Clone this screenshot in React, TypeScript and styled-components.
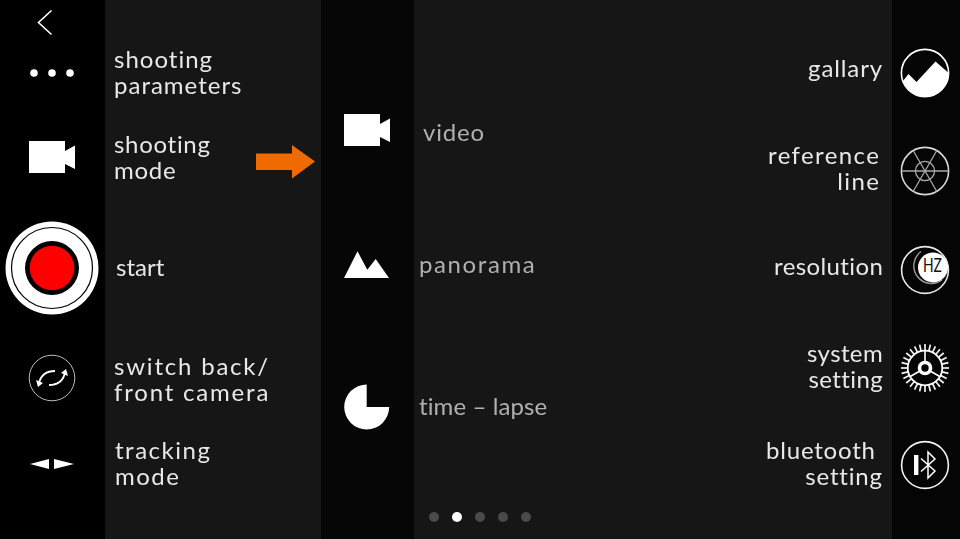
import React from "react";
import styled, { createGlobalStyle } from "styled-components";

const Global = createGlobalStyle`
  html, body { margin: 0; padding: 0; background: #161616; }
  #root { width: 960px; height: 539px; overflow: hidden; }
`;

const Screen = styled.div`
  display: flex;
  width: 960px;
  height: 539px;
  background: #161616;
  font-family: "Lato", "Liberation Sans", sans-serif;
  font-size: 24px;
  font-weight: 400;
  line-height: 26px;
  letter-spacing: 1px;
  color: #e8e8e8;
`;

const LeftSection = styled.section`
  width: 321px;
  display: flex;
  flex-direction: column;
`;

const MidSection = styled.section`
  width: 571px;
  display: flex;
  flex-direction: column;
`;

const RightSection = styled.section`
  width: 68px;
  flex: 1;
  display: flex;
  flex-direction: column;
  margin-left: -203px;
`;

const Row = styled.div<{ $h: number }>`
  display: flex;
  align-items: stretch;
  height: ${(p) => p.$h}px;
`;

const RailCell = styled.div`
  width: 105px;
  flex: none;
  box-sizing: border-box;
  padding-right: 2px;
  background: #000;
  display: flex;
  align-items: center;
  justify-content: center;
`;

const LeftText = styled.div<{ $x?: number; $up?: number }>`
  flex: 1;
  display: flex;
  align-items: center;
  justify-content: space-between;
  will-change: transform;
  padding: 0 6px ${(p) => p.$up ?? 2}px ${(p) => p.$x ?? 9}px;
`;

const Phrase = styled.span<{ $ls?: number; $dy?: number }>`
  letter-spacing: ${(p) => p.$ls ?? 1}px;
  margin-top: ${(p) => p.$dy ?? 0}px;
`;

const ArrowSlot = styled.span`
  display: block;
  margin-top: 9px;
`;

const MidCell = styled.div`
  width: 93px;
  flex: none;
  box-sizing: border-box;
  padding-right: 1px;
  background: #060606;
  display: flex;
  align-items: center;
  justify-content: center;
`;

const MidLabel = styled.div<{ $x: number; $dy?: number; $ls?: number }>`
  display: flex;
  align-items: center;
  padding-left: ${(p) => p.$x}px;
  padding-top: ${(p) => p.$dy ?? 0}px;
  padding-bottom: 2px;
  color: #b0b0b0;
  will-change: transform;
  letter-spacing: ${(p) => p.$ls ?? 1}px;
`;

const Pager = styled.div`
  display: flex;
  align-items: center;
  gap: 13px;
  padding: 0 0 0 15px;
`;

const Dot = styled.span<{ $on?: boolean }>`
  width: 10px;
  height: 10px;
  border-radius: 50%;
  background: ${(p) => (p.$on ? "#ffffff" : "#4a4a4a")};
`;

const RightRow = styled.div<{ $h: number }>`
  display: flex;
  justify-content: flex-end;
  align-items: stretch;
  height: ${(p) => p.$h}px;
`;

const RightLabel = styled.div<{ $dy?: number; $pr?: number; $ls?: number }>`
  align-self: center;
  text-align: right;
  padding-right: ${(p) => p.$pr ?? 9}px;
  margin-top: ${(p) => p.$dy ?? 0}px;
  letter-spacing: ${(p) => p.$ls ?? 1}px;
  will-change: transform;
  white-space: nowrap;
`;

const RightCell = styled.div`
  width: 68px;
  flex: none;
  box-sizing: border-box;
  padding-right: 2px;
  background: #050505;
  display: flex;
  align-items: center;
  justify-content: center;
`;

const Icon = styled.svg`
  display: block;
  flex: none;
`;

const Back = () => (
  <Icon width="60" height="45" viewBox="0 0 60 45">
    <polyline points="29.5,10.5 16.5,22.5 29.5,34.5" fill="none" stroke="#fff" strokeWidth="1.6" />
  </Icon>
);
const Dots = () => (
  <Icon width="50" height="10" viewBox="0 0 50 10">
    <circle cx="7" cy="5" r="3.8" fill="#fff" />
    <circle cx="25" cy="5" r="3.8" fill="#fff" />
    <circle cx="43" cy="5" r="3.8" fill="#fff" />
  </Icon>
);
const Cam = () => (
  <Icon width="46" height="32" viewBox="0 0 46 32">
    <rect x="0" y="0" width="36" height="32" fill="#fff" />
    <polygon points="36,10 46,4.5 46,28 36,23" fill="#fff" />
  </Icon>
);
const Record = () => (
  <Icon width="94" height="94" viewBox="0 0 94 94">
    <circle cx="47" cy="47" r="46.5" fill="#fff" />
    <circle cx="47" cy="47" r="40.5" fill="none" stroke="#000" strokeWidth="1.2" />
    <circle cx="47" cy="47" r="27" fill="#000" />
    <circle cx="47" cy="47" r="22.3" fill="#f00" />
  </Icon>
);
const Switch = () => (
  <Icon width="48" height="48" viewBox="0 0 48 48">
    <circle cx="24" cy="24" r="22.8" fill="none" stroke="#bdbdbd" strokeWidth="1" />
    <path d="M11 29 C13 21 18 17 27 17" fill="none" stroke="#fff" strokeWidth="1.8" />
    <path d="M37 19 C35 27 30 31 21 31" fill="none" stroke="#fff" strokeWidth="1.8" />
    <polygon points="8,26 15,29 10,33" fill="#fff" />
    <polygon points="40,22 33,19 38,15" fill="#fff" />
  </Icon>
);
const Track = () => (
  <Icon width="44" height="10" viewBox="0 0 44 10">
    <polygon points="0,5 19,0 19,10" fill="#fff" />
    <polygon points="44,5 24,0 24,10" fill="#fff" />
  </Icon>
);
const Arrow = () => (
  <Icon width="59" height="34" viewBox="0 0 59 34">
    <polygon points="0,8.5 36,8.5 36,0 59,16.5 36,33.5 36,25 0,25" fill="#ef6a00" />
  </Icon>
);
const Mount = () => (
  <Icon width="46" height="28" viewBox="0 0 46 28">
    <polygon points="0,27 13.5,0.3 23.3,18.7 31.7,8 45,27" fill="#fff" />
  </Icon>
);
const Pie = () => (
  <Icon width="46" height="46" viewBox="0 0 46 46">
    <path d="M22.7 0.5 A22.5 22.5 0 1 0 45.2 23 L22.7 23 Z" fill="#fff" />
  </Icon>
);
const Gallery = () => (
  <Icon width="50" height="50" viewBox="0 0 50 50">
    <clipPath id="gal"><circle cx="25" cy="25" r="24" /></clipPath>
    <polygon clipPath="url(#gal)" points="0,36 3,33 8.5,26 16.5,34 35.5,13.5 50,26 50,50 0,50" fill="#fff" />
    <circle cx="25" cy="25" r="23.6" fill="none" stroke="#fff" strokeWidth="1.6" />
  </Icon>
);
const Reference = () => (
  <Icon width="50" height="50" viewBox="0 0 50 50">
    <circle cx="25" cy="25" r="23.6" fill="none" stroke="#d8d8d8" strokeWidth="1.6" />
    <circle cx="25" cy="25" r="9.6" fill="none" stroke="#a8a8a8" strokeWidth="1.3" />
    <path d="M1.5 25 H48.5 M13.3 4.7 L36.7 45.3 M36.7 4.7 L13.3 45.3" stroke="#a8a8a8" strokeWidth="1.3" />
  </Icon>
);
const Hz = () => (
  <Icon width="50" height="50" viewBox="0 0 50 50">
    <circle cx="25" cy="25" r="23.4" fill="none" stroke="#e8e8e8" strokeWidth="1.6" />
    <path d="M21 6.5 A17.5 17.5 0 1 0 42 35" fill="none" stroke="#9a9a9a" strokeWidth="1.4" />
    <circle cx="33" cy="22.5" r="15" fill="#fff" />
    <text x="23" y="27" fontFamily="Lato, sans-serif" fontSize="19" letterSpacing="0" textLength="19" lengthAdjust="spacingAndGlyphs" fill="#111">HZ</text>
  </Icon>
);
const System = () => {
  const ticks = Array.from({ length: 28 }, (_, i) => (i * 360) / 28);
  return (
    <Icon width="50" height="50" viewBox="0 0 50 50">
      {ticks.map((a) => (
        <line key={a} x1="25" y1="1" x2="25" y2="7.5" stroke="#f4f4f4" strokeWidth="1.7" transform={`rotate(${a} 25 25)`} />
      ))}
      <circle cx="25" cy="25" r="17.3" fill="none" stroke="#fff" strokeWidth="1.8" />
      <path d="M25 7.5 V18 M9.8 33.7 L19 28.5 M40.2 33.7 L31 28.5" stroke="#fff" strokeWidth="1.6" />
      <circle cx="25" cy="25" r="5.5" fill="#000" stroke="#fff" strokeWidth="3.6" />
    </Icon>
  );
};
const Bluetooth = () => (
  <Icon width="50" height="50" viewBox="0 0 50 50">
    <circle cx="25" cy="25" r="23.4" fill="none" stroke="#f2f2f2" strokeWidth="1.6" />
    <rect x="14" y="15" width="4.4" height="20" fill="#fff" />
    <path d="M21 18.5 L35 31 L28 38 V12 L35 19 L21 31.5" fill="none" stroke="#fff" strokeWidth="1.5" />
  </Icon>
);

export default function App() {
  return (
    <Screen>
      <Global />
      <LeftSection>
        <Row $h={45}><RailCell><Back /></RailCell><LeftText /></Row>
        <Row $h={56}>
          <RailCell><Dots /></RailCell>
          <LeftText><Phrase>shooting<br />parameters</Phrase></LeftText>
        </Row>
        <Row $h={112}>
          <RailCell><Cam /></RailCell>
          <LeftText $up={0}><Phrase $ls={0.7}>shooting<br />mode</Phrase><ArrowSlot><Arrow /></ArrowSlot></LeftText>
        </Row>
        <Row $h={110}>
          <RailCell><Record /></RailCell>
          <LeftText $x={11} $up={2}><Phrase $ls={0}>start</Phrase></LeftText>
        </Row>
        <Row $h={110}>
          <RailCell><Switch /></RailCell>
          <LeftText $up={0}><Phrase $ls={1.8} $dy={2}>switch back/<br />front camera</Phrase></LeftText>
        </Row>
        <Row $h={62}>
          <RailCell><Track /></RailCell>
          <LeftText $x={10}><Phrase $ls={1.5}>tracking<br />mode</Phrase></LeftText>
        </Row>
        <Row $h={44}><RailCell /><LeftText /></Row>
      </LeftSection>
      <MidSection>
        <Row $h={70}><MidCell /></Row>
        <Row $h={120}>
          <MidCell><Cam /></MidCell>
          <MidLabel $x={9} $dy={6} $ls={0.8}>video</MidLabel>
        </Row>
        <Row $h={150}>
          <MidCell><Mount /></MidCell>
          <MidLabel $x={5} $ls={1.6}>panorama</MidLabel>
        </Row>
        <Row $h={134}>
          <MidCell><Pie /></MidCell>
          <MidLabel $x={5} $ls={0.1}>time – lapse</MidLabel>
        </Row>
        <Row $h={21}><MidCell /></Row>
        <Row $h={44}>
          <MidCell />
          <Pager>
            <Dot /><Dot $on /><Dot /><Dot /><Dot />
          </Pager>
        </Row>
      </MidSection>
      <RightSection>
        <RightRow $h={24}><RightCell /></RightRow>
        <RightRow $h={98}><RightLabel $dy={-10} $ls={0.9}>gallary</RightLabel><RightCell><Gallery /></RightCell></RightRow>
        <RightRow $h={98}><RightLabel $dy={-6} $pr={12} $ls={1.4}>reference<br />line</RightLabel><RightCell><Reference /></RightCell></RightRow>
        <RightRow $h={100}><RightLabel $dy={-8} $ls={0.4}>resolution</RightLabel><RightCell><Hz /></RightCell></RightRow>
        <RightRow $h={96}><RightLabel $dy={-4} $ls={0.4}>system<br />setting</RightLabel><RightCell><System /></RightCell></RightRow>
        <RightRow $h={98}><RightLabel $dy={-4} $ls={0.8}>bluetooth{"\u00a0"}<br />setting</RightLabel><RightCell><Bluetooth /></RightCell></RightRow>
        <RightRow $h={25}><RightCell /></RightRow>
      </RightSection>
    </Screen>
  );
}
